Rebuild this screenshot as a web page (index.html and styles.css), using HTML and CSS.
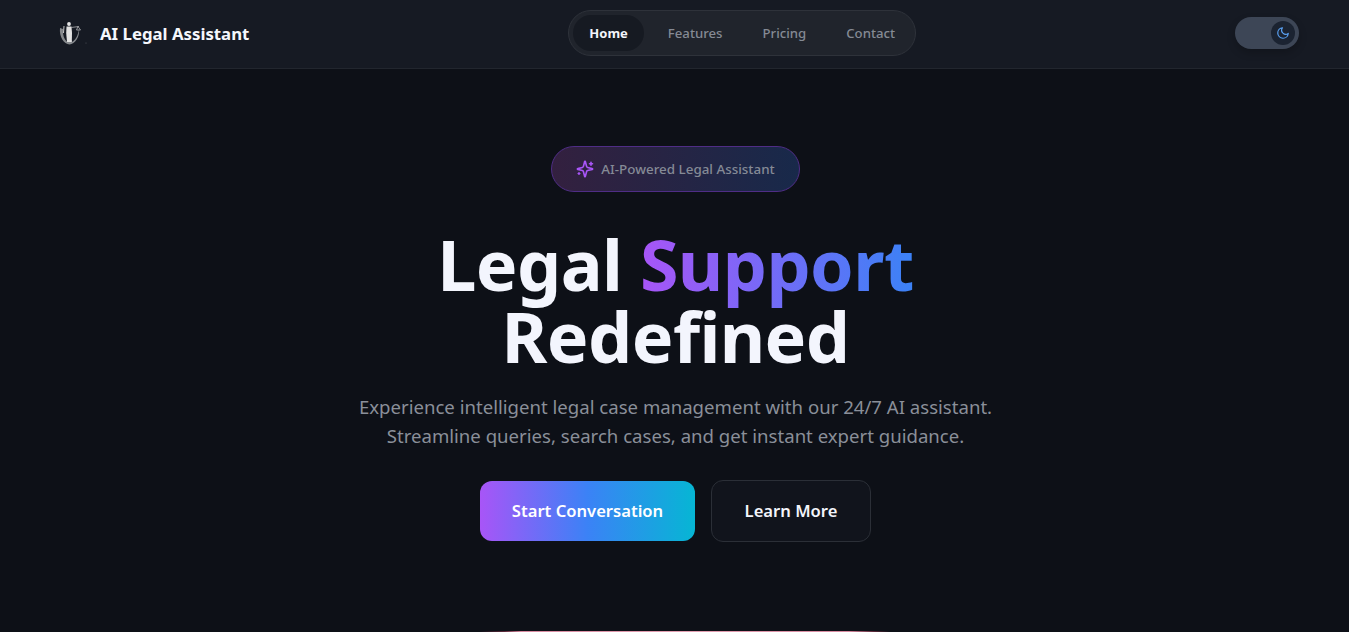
FILE: index.html
```html
<!DOCTYPE html>
<html lang="en">
<head>
  <meta charset="UTF-8">
  <title>AI Legal Assistant</title>
  <link rel="stylesheet" href="styles.css">
</head>
<body>

<header class="navbar">
  <div class="brand">
    <svg class="brand-logo" viewBox="0 0 32 32" aria-hidden="true">
      <path d="M4 11 C3 20 8 27 13.5 27.5 C19 27 24 20 23 12 C22 19 19 24 15.5 25 L15.5 23 L11.5 23 L11.5 25 C8 23 6.5 17 7 12 Z" fill="#85888c"/>
      <circle cx="13" cy="7" r="1.9" fill="#e6e6e6"/>
      <path d="M10.5 9.5 L15.5 9.5 L16 16 L15.8 25 L11 25 L10.2 16 Z" fill="#e2e2e2"/>
      <path d="M15 10.5 L23 9.5 M22 9.5 L20.5 13 L24.5 13 Z" stroke="#aeb0b3" stroke-width="0.8" fill="none"/>
      <path d="M8 9 L7.5 16" stroke="#c8c8c8" stroke-width="1"/>
      <circle cx="30" cy="26" r="0.4" fill="#8d9094"/>
    </svg>
    <span class="brand-name">AI Legal Assistant</span>
  </div>

  <nav class="nav-pill">
    <a class="nav-link active" href="#">Home</a>
    <a class="nav-link" href="#">Features</a>
    <a class="nav-link" href="#">Pricing</a>
    <a class="nav-link" href="#">Contact</a>
  </nav>

  <div class="theme-toggle">
    <span class="toggle-knob">
      <svg viewBox="0 0 24 24" class="moon" aria-hidden="true">
        <path d="M21 12.8A9 9 0 1 1 11.2 3a7 7 0 0 0 9.8 9.8z"/>
      </svg>
    </span>
  </div>
</header>

<main class="hero">
  <div class="badge">
    <svg viewBox="0 0 24 24" class="sparkle" aria-hidden="true">
      <path d="M9.9 15.5A2 2 0 0 0 8.5 14.1L2.4 12.5a.5.5 0 0 1 0-1l6.1-1.6a2 2 0 0 0 1.4-1.4l1.6-6.1a.5.5 0 0 1 1 0l1.6 6.1a2 2 0 0 0 1.4 1.4l6.1 1.6a.5.5 0 0 1 0 1l-6.1 1.6a2 2 0 0 0-1.4 1.4l-1.6 6.1a.5.5 0 0 1-1 0z"/>
      <path d="M20 3v4M22 5h-4M4 17v2M5 18H3"/>
    </svg>
    <span>AI-Powered Legal Assistant</span>
  </div>

  <h1 class="title">Legal <span class="gradient-text">Support</span><br>Redefined</h1>

  <p class="subtitle">Experience intelligent legal case management with our 24/7 AI assistant.<br>Streamline queries, search cases, and get instant expert guidance.</p>

  <div class="actions">
    <button class="btn btn-primary" type="button">Start Conversation</button>
    <button class="btn btn-secondary" type="button">Learn More</button>
  </div>
</main>

<div class="next-section"></div>

</body>
</html>
```

FILE: styles.css
```css
* {
  box-sizing: border-box;
}

html, body {
  height: 100%;
}

body {
  margin: 0;
  overflow: hidden;
  background-color: #0d1017;
  color: #f3f5fb;
  font-family: "Noto Sans", "Open Sans", Arial, sans-serif;
  display: flex;
  flex-direction: column;
}

.navbar {
  height: 69px;
  flex-shrink: 0;
  padding: 0 50px 2px 56px;
  display: flex;
  align-items: center;
  justify-content: space-between;
  background-color: #161a23;
  border-bottom: 1px solid #22262e;
}

.brand {
  display: flex;
  align-items: center;
  gap: 12px;
}

.brand-logo {
  width: 32px;
  height: 32px;
}

.brand-name {
  font-size: 16.8px;
  font-weight: 700;
  color: #f5f7fc;
}

.nav-pill {
  height: 46px;
  padding: 4px;
  display: flex;
  align-items: center;
  background-color: #20242c;
  border: 1px solid #2e323a;
  border-radius: 23px;
}

.nav-link {
  height: 36px;
  padding: 0 16px;
  margin-right: 8px;
  display: flex;
  align-items: center;
  font-size: 13.2px;
  font-weight: 500;
  color: #858a94;
  text-decoration: none;
  border-radius: 18px;
}

.nav-link:last-child {
  margin-right: 0;
}

.nav-link.active {
  font-size: 13px;
  font-weight: 700;
  color: #f3f5fb;
  background-color: #161a22;
}

.theme-toggle {
  width: 64px;
  height: 32px;
  padding: 4px;
  display: flex;
  justify-content: flex-end;
  align-items: center;
  background-color: #3d4656;
  border-radius: 16px;
  box-shadow: 0 4px 8px rgba(0, 0, 0, 0.2);
}

.toggle-knob {
  width: 24px;
  height: 24px;
  display: flex;
  align-items: center;
  justify-content: center;
  background-color: #1b2331;
  border-radius: 50%;
}

.moon {
  width: 14px;
  height: 14px;
  fill: none;
  stroke: #5aa2f5;
  stroke-width: 2;
  stroke-linecap: round;
  stroke-linejoin: round;
}

.hero {
  flex: 1;
  padding: 77px 0 0 2px;
  display: flex;
  flex-direction: column;
  align-items: center;
}

.badge {
  height: 46px;
  padding: 0 24px;
  display: flex;
  align-items: center;
  gap: 7px;
  font-size: 13.4px;
  font-weight: 500;
  color: #858a96;
  background: linear-gradient(90deg, #33203f, #18294a);
  border: 1px solid #4f2d86;
  border-radius: 23px;
}

.sparkle {
  width: 18px;
  height: 18px;
  fill: none;
  stroke: #a855f7;
  stroke-width: 2.2;
  stroke-linecap: round;
  stroke-linejoin: round;
}

.title {
  margin: 36px 0 0;
  font-size: 70px;
  line-height: 72px;
  letter-spacing: -0.6px;
  font-weight: 700;
  text-align: center;
  color: #f3f5fd;
}

.gradient-text {
  background: linear-gradient(90deg, #a855f7, #3b82f6);
  -webkit-background-clip: text;
  background-clip: text;
  color: transparent;
}

.subtitle {
  margin: 20px 0 0;
  font-size: 18.6px;
  line-height: 29px;
  text-align: center;
  color: #8a8f99;
}

.actions {
  margin-top: 30px;
  display: flex;
  align-items: center;
  gap: 16px;
}

.btn {
  padding: 0 0 2px;
  font-family: inherit;
  font-size: 16.6px;
  font-weight: 600;
  border-radius: 12px;
  cursor: pointer;
}

.btn-primary {
  width: 215px;
  height: 60px;
  border: none;
  color: #fff;
  background: linear-gradient(90deg, #a855f7, #3b82f6 50%, #06b6d4);
}

.btn-secondary {
  width: 160px;
  height: 62px;
  color: #f3f5fb;
  background-color: #11141c;
  border: 1px solid #2b2f37;
}

.next-section {
  flex-shrink: 0;
  width: 410px;
  height: 1px;
  margin-left: 480px;
  background: linear-gradient(90deg, #0d1017, #5a2838 6%, #d88aa0 10%, #e3a0b2 50%, #d88aa0 90%, #5a2838 96%, #0d1017);
}
```
